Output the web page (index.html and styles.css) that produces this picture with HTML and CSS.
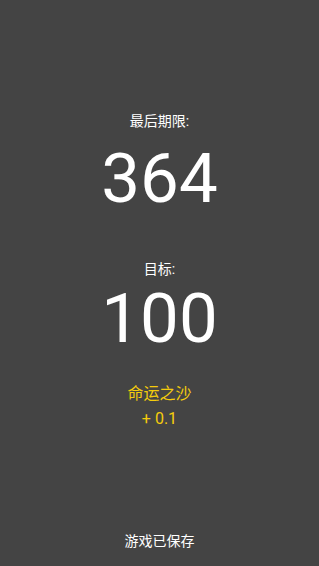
FILE: index.html
```html
<!DOCTYPE html>
<html lang="zh">
<head>
<meta charset="utf-8">
<link rel="stylesheet" href="styles.css">
</head>
<body>
<main class="screen">
  <section class="stat deadline">
    <div class="label">最后期限:</div>
    <div class="value">364</div>
  </section>
  <section class="stat goal">
    <div class="label">目标:</div>
    <div class="value">100</div>
  </section>
  <section class="bonus">
    <div class="bonus-name">命运之沙</div>
    <div class="bonus-value">+ 0.1</div>
  </section>
  <footer class="status">游戏已保存</footer>
</main>
</body>
</html>
```

FILE: styles.css
```css
html, body {
  margin: 0;
  padding: 0;
  background: #444444;
}
.screen {
  width: 319px;
  height: 566px;
  display: flex;
  flex-direction: column;
  align-items: center;
  font-family: Roboto, "Noto Sans CJK SC", sans-serif;
  color: #ffffff;
  box-sizing: border-box;
  padding-top: 112px;
}
.stat {
  display: flex;
  flex-direction: column;
  align-items: center;
}
.label {
  font-size: 14px;
  line-height: 18px;
}
.value {
  font-size: 69px;
  line-height: 81px;
}
.deadline .value {
  margin-top: 8px;
}
.goal {
  margin-top: 41px;
}
.bonus {
  margin-top: 22px;
  display: flex;
  flex-direction: column;
  align-items: center;
  color: #f5cc0c;
  font-size: 16px;
  line-height: 25px;
}
.status {
  margin-top: auto;
  margin-bottom: 15px;
  font-size: 14px;
  line-height: 20px;
}
```
